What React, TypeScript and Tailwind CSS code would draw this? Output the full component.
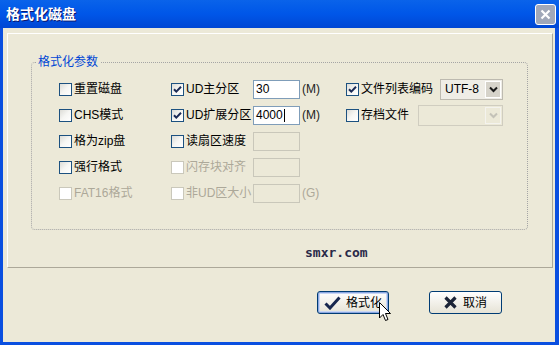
import React from 'react'

const FONT = "font-['Liberation_Sans','Noto_Sans_CJK_SC',sans-serif]"

function Check({ checked = false, disabled = false }: { checked?: boolean; disabled?: boolean }) {
  return (
    <span
      className={`flex w-[13px] h-[13px] shrink-0 items-center justify-center border ${
        disabled ? 'border-[#cac8bb] bg-white' : 'border-[#1c5180] bg-gradient-to-br from-[#dcdcd7] via-[#f6f6f3] to-white'
      }`}
    >
      {checked && (
        <svg width="11" height="11" viewBox="0 0 11 11">
          <path d="M2 5.2 L4.3 7.6 L9 2.8" fill="none" stroke="#1b2a55" strokeWidth="2" />
        </svg>
      )}
    </span>
  )
}

function Opt({ label, checked, disabled, w }: { label: string; checked?: boolean; disabled?: boolean; w: string }) {
  return (
    <div className={`flex items-center gap-[2px] ${w}`}>
      <Check checked={checked} disabled={disabled} />
      <span className={disabled ? 'text-[#aca899]' : 'text-black'}>{label}</span>
    </div>
  )
}

function Field({ value, disabled, caret }: { value?: string; disabled?: boolean; caret?: boolean }) {
  return (
    <div
      className={`flex h-[19px] w-[47px] items-center border pl-[2px] ${
        disabled ? 'border-[#c9c7ba] bg-[#ece9d8]' : 'border-[#7f9db9] bg-white'
      }`}
    >
      <span className="text-black">{value}</span>
      {caret && <span className="ml-[1px] h-[13px] w-px bg-black" />}
    </div>
  )
}

function Unit({ t, disabled }: { t: string; disabled?: boolean }) {
  return <span className={`w-[46px] pl-[2px] ${disabled ? 'text-[#aca899]' : 'text-[#222]'}`}>{t}</span>
}

function Select({ value, disabled, w }: { value?: string; disabled?: boolean; w: string }) {
  return (
    <div
      className={`flex h-[21px] ${w} items-center justify-between border p-px ${
        disabled ? 'border-[#d0cdc0] bg-[#ece9d8]' : 'border-[#bdbab0] bg-[#efede6]'
      }`}
    >
      <span className="pl-[3px] text-black">{value}</span>
      <span
        className={`flex h-full w-[16px] items-center justify-center border ${
          disabled ? 'border-[#f4f3ee] bg-[#ece9d8]' : 'border-white bg-[#d6d3ca]'
        }`}
      >
        <svg width="9" height="7" viewBox="0 0 9 7">
          <path d="M1 1.5 L4.5 5 L8 1.5" fill="none" stroke={disabled ? '#c4c2b8' : '#1a1a1a'} strokeWidth="2" />
        </svg>
      </span>
    </div>
  )
}

export default function App() {
  return (
    <div className={`flex h-[345px] w-[559px] flex-col bg-[#0a4fe0] text-[12px] leading-[14px] ${FONT}`}>
      {/* title bar */}
      <div className="flex h-[28px] shrink-0 items-center justify-between bg-gradient-to-b from-[#0a63ea] via-[#0056e8] to-[#0047d4] pl-[6px] pr-[3px]">
        <span className="text-[14px] font-bold text-white [text-shadow:1px_1px_0_#0a1870]">格式化磁盘</span>
        <div className="flex h-[21px] w-[21px] items-center justify-center rounded-[3px] border border-white bg-[#a0a8b9]">
          <svg width="11" height="11" viewBox="0 0 11 11">
            <path d="M1.5 1.5 L9.5 9.5 M9.5 1.5 L1.5 9.5" stroke="white" strokeWidth="2.2" />
          </svg>
        </div>
      </div>

      {/* body */}
      <div className="mb-[3px] ml-[3px] mr-[4px] flex flex-1 flex-col bg-[#ece9d8]">
        <div className="ml-[4px] mt-[5px] flex h-[235px] w-[546px] flex-col border border-b-[#aca899] border-l-white border-r-[#aca899] border-t-white">
          <fieldset className="ml-[23px] mt-[21px] h-[175px] w-[497px] rounded-[4px] border border-dotted border-[#a5a5a5] p-0">
            <legend className="ml-[4px] px-[2px] text-[#0046d5]">格式化参数</legend>
            <div className="flex flex-col pl-[27px] pt-[7px]">
              <div className="flex h-[26px] items-center">
                <Opt w="w-[112px]" label="重置磁盘" />
                <Opt w="w-[82px]" label="UD主分区" checked />
                <Field value="30" />
                <Unit t="(M)" />
                <Opt w="w-[94px]" label="文件列表编码" checked />
                <Select w="w-[63px]" value="UTF-8" />
              </div>
              <div className="flex h-[26px] items-center">
                <Opt w="w-[112px]" label="CHS模式" />
                <Opt w="w-[82px]" label="UD扩展分区" checked />
                <Field value="4000" caret />
                <Unit t="(M)" />
                <Opt w="w-[72px]" label="存档文件" />
                <Select w="w-[85px]" disabled />
              </div>
              <div className="flex h-[26px] items-center">
                <Opt w="w-[112px]" label="格为zip盘" />
                <Opt w="w-[82px]" label="读扇区速度" />
                <Field disabled />
              </div>
              <div className="flex h-[26px] items-center">
                <Opt w="w-[112px]" label="强行格式" />
                <Opt w="w-[82px]" label="闪存块对齐" disabled />
                <Field disabled />
              </div>
              <div className="flex h-[26px] items-center">
                <Opt w="w-[112px]" label="FAT16格式" disabled />
                <Opt w="w-[82px]" label="非UD区大小" disabled />
                <Field disabled />
                <Unit t="(G)" disabled />
              </div>
            </div>
          </fieldset>
          <div className="ml-[297px] mt-[16px] font-['DejaVu_Sans_Mono',monospace] text-[13px] font-bold text-[#2a2a48]">
            smxr.com
          </div>
        </div>

        {/* buttons */}
        <div className="ml-[314px] mt-[23px] flex gap-[40px]">
          <div className="relative flex h-[23px] w-[72px] items-center justify-center gap-[5px] rounded-[3px] border border-[#003c74] bg-gradient-to-b from-white to-[#e6e3d6] shadow-[inset_0_0_0_1px_#8aa6e0,inset_0_0_0_2px_#c8d6f4]">
            <svg width="17" height="14" viewBox="0 0 17 14">
              <path d="M1.5 7.5 L6 12 L15.5 1.5" fill="none" stroke="#16264e" strokeWidth="3" />
            </svg>
            <span className="text-black">格式化</span>
            <svg className="absolute left-[61px] top-[10px]" width="13" height="21" viewBox="0 0 13 21">
              <path d="M0.5 0.5 L0.5 16 L4 12.5 L6.5 18.5 L9 17.5 L6.5 11.5 L11.5 11.5 Z" fill="white" stroke="black" strokeWidth="1" />
            </svg>
          </div>
          <div className="flex h-[23px] w-[73px] items-center justify-center gap-[6px] rounded-[3px] border border-[#003c74] bg-gradient-to-b from-white to-[#e6e3d6]">
            <svg width="13" height="13" viewBox="0 0 13 13">
              <path d="M1.5 1.5 L11.5 11.5 M11.5 1.5 L1.5 11.5" stroke="#1b2438" strokeWidth="3.2" />
            </svg>
            <span className="text-black">取消</span>
          </div>
        </div>
      </div>
    </div>
  )
}
